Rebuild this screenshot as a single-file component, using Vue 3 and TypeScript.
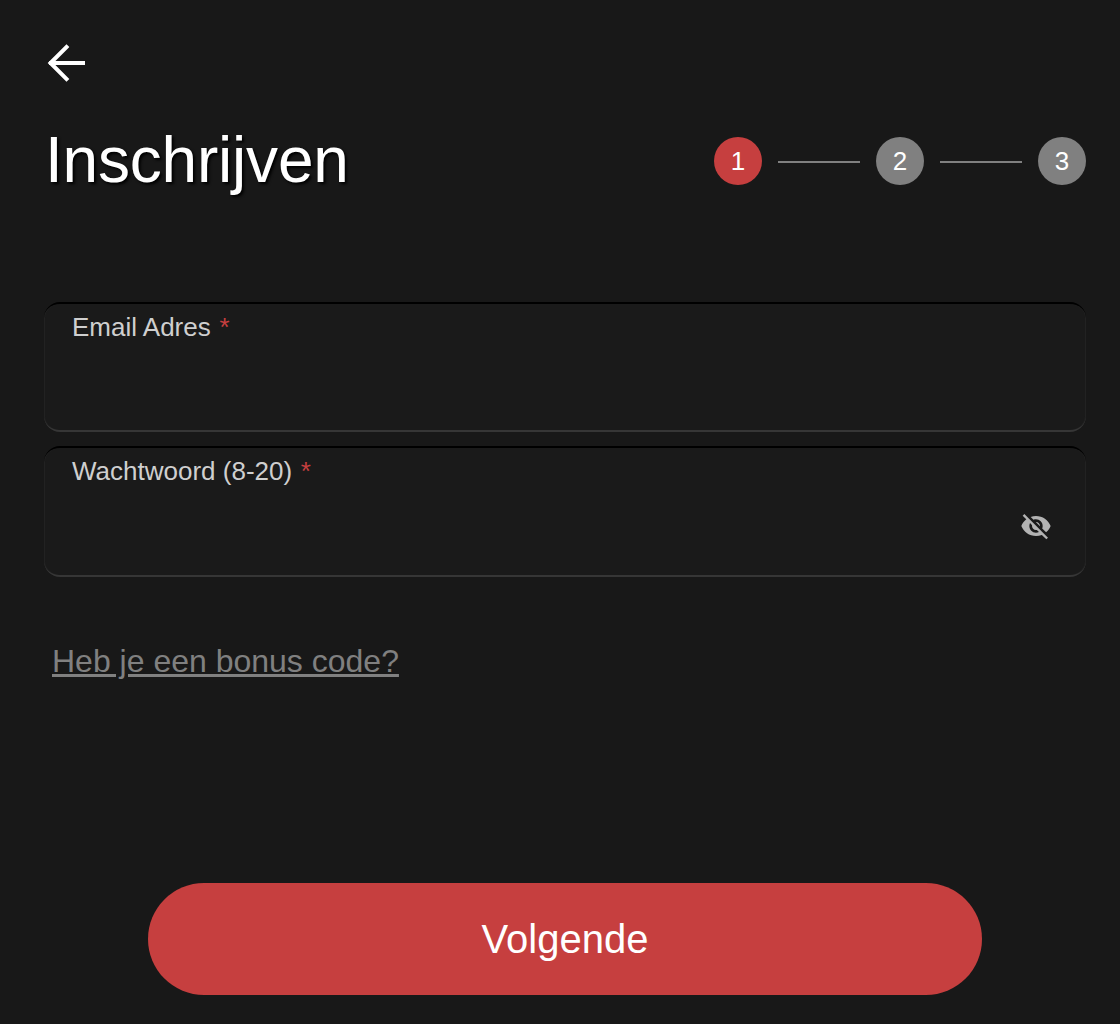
<script setup lang="ts">
const steps: number[] = [1, 2, 3];
</script>

<template>
  <div class="page">
    <button class="back" type="button" aria-label="Terug">
      <svg viewBox="0 0 40 40" width="40" height="40" fill="none" stroke="#fff" stroke-width="4" stroke-linecap="square">
        <path d="M37 20H5" />
        <path d="M20.5 4 4.5 20l16 16" />
      </svg>
    </button>

    <div class="head">
      <h1 class="title">Inschrijven</h1>
      <div class="steps">
        <template v-for="s in steps" :key="s">
          <span class="dot" :class="{ active: s === 1 }">{{ s }}</span>
          <span v-if="s < 3" class="line"></span>
        </template>
      </div>
    </div>

    <div class="fields">
      <div class="field">
        <label class="label">Email Adres <span class="req">*</span></label>
      </div>
      <div class="field field-tall">
        <label class="label">Wachtwoord (8-20) <span class="req">*</span></label>
        <svg class="eye" viewBox="0 0 24 24" width="32" height="32" fill="#b3b3b3">
          <path d="M12 7c2.76 0 5 2.24 5 5 0 .65-.13 1.26-.36 1.83l2.92 2.92c1.51-1.26 2.7-2.89 3.43-4.75-1.73-4.39-6-7.5-11-7.5-1.4 0-2.74.25-3.98.7l2.16 2.16C10.74 7.13 11.35 7 12 7zM2 4.27l2.28 2.28.46.46C3.08 8.3 1.78 10.02 1 12c1.73 4.39 6 7.5 11 7.5 1.55 0 3.03-.3 4.38-.84l.42.42L19.73 22 21 20.73 3.27 3 2 4.27zM7.53 9.8l1.55 1.55c-.05.21-.08.43-.08.65 0 1.66 1.34 3 3 3 .22 0 .44-.03.65-.08l1.55 1.55c-.67.33-1.41.53-2.2.53-2.76 0-5-2.24-5-5 0-.79.2-1.53.53-2.2zm4.31-.78l3.15 3.15.02-.16c0-1.66-1.34-3-3-3l-.17.01z" />
        </svg>
      </div>
    </div>

    <a class="bonus" href="#">Heb je een bonus code?</a>

    <button class="next" type="button">Volgende</button>
  </div>
</template>

<style scoped>
.page {
  box-sizing: border-box;
  height: 1024px;
  padding: 43px 34px 29px 44px;
  display: flex;
  flex-direction: column;
  background: #181818;
  font-family: "Liberation Sans", Arial, sans-serif;
  overflow: hidden;
}
.back {
  width: 40px;
  height: 40px;
  margin-left: 2px;
  padding: 0;
  border: 0;
  background: none;
  display: block;
}
.back svg {
  display: block;
}
.head {
  margin-top: 42px;
  display: flex;
  align-items: center;
  justify-content: space-between;
  height: 72px;
}
.title {
  margin: 0 0 2px 1px;
  font-size: 64px;
  line-height: 72px;
  font-weight: 400;
  letter-spacing: -0.2px;
  color: #fff;
  text-shadow: 2px 2px 3px #000;
}
.steps {
  display: flex;
  align-items: center;
  gap: 16px;
}
.dot {
  width: 48px;
  height: 48px;
  border-radius: 50%;
  background: #808080;
  color: #fff;
  font-size: 26px;
  display: flex;
  align-items: center;
  justify-content: center;
}
.dot.active {
  background: #c63f3f;
}
.line {
  width: 82px;
  height: 2px;
  margin-top: 1px;
  background: #808080;
}
.fields {
  margin-top: 105px;
  display: flex;
  flex-direction: column;
  gap: 14px;
}
.field {
  box-sizing: border-box;
  height: 130px;
  position: relative;
  padding: 8px 28px 0;
  border-radius: 16px;
  background: #1a1a1a;
  border-top: 2px solid #000;
  border-bottom: 2px solid #363636;
  box-shadow: inset 1px 0 0 #222, inset -1px 0 0 #222;
}
.field-tall {
  height: 131px;
}
.label {
  display: block;
  font-size: 26px;
  line-height: 30px;
  color: #cfcfcf;
}
.req {
  margin-left: 1.5px;
  color: #c63f3f;
}
.eye {
  position: absolute;
  right: 34px;
  top: 62px;
}
.bonus {
  margin: 66px 0 0 8px;
  align-self: flex-start;
  font-size: 32px;
  line-height: 37px;
  color: #808080;
  text-decoration: underline;
  text-decoration-thickness: 3px;
}
.next {
  margin: auto 70px 0 104px;
  width: 834px;
  height: 112px;
  border: 0;
  border-radius: 56px;
  background: #c63f3f;
  color: #fff;
  font-family: inherit;
  font-size: 40px;
}
</style>
